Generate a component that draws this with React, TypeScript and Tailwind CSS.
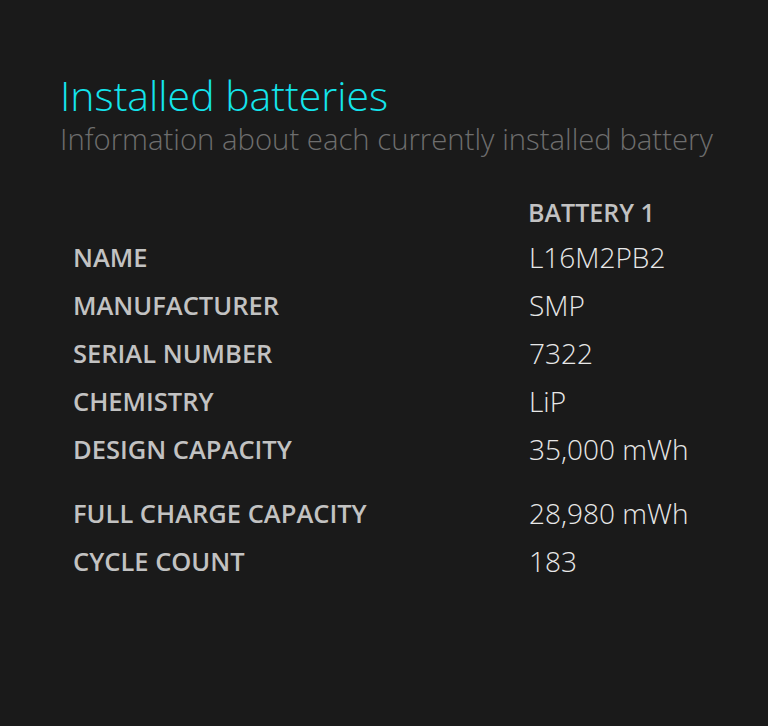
import React from "react";

const rows: [string, string][] = [
  ["NAME", "L16M2PB2"],
  ["MANUFACTURER", "SMP"],
  ["SERIAL NUMBER", "7322"],
  ["CHEMISTRY", "LiP"],
  ["DESIGN CAPACITY", "35,000 mWh"],
];
const rows2: [string, string][] = [
  ["FULL CHARGE CAPACITY", "28,980 mWh"],
  ["CYCLE COUNT", "183"],
];

function Row({ label, value }: { label: string; value: string }) {
  return (
    <div className="flex h-[48px] items-center">
      <div className="w-[469px] pl-[13px] text-[25.5px] font-semibold text-[#c2c2c2]">{label}</div>
      <div className="text-[28px] font-light text-[#e8e8e8]">{value}</div>
    </div>
  );
}

export default function App() {
  return (
    <div
      className="h-[726px] w-[768px] bg-[#1a1a1a] pl-[60px] pt-[71px]"
      style={{ fontFamily: '"Open Sans", "Noto Sans", sans-serif' }}
    >
      <h1 className="text-[41px] font-light leading-[48px] text-[#14e4ec]">Installed batteries</h1>
      <p className="text-[29.3px] font-light leading-[40px] text-[#6e6e6e]">
        Information about each currently installed battery
      </p>
      <div className="mt-[34px]">
        <div className="flex h-[40px] items-center">
          <div className="w-[468px]" />
          <div className="text-[25px] font-semibold text-[#c2c2c2]">BATTERY 1</div>
        </div>
        {rows.map(([l, v]) => (
          <Row key={l} label={l} value={v} />
        ))}
        <div className="h-[16px]" />
        {rows2.map(([l, v]) => (
          <Row key={l} label={l} value={v} />
        ))}
      </div>
    </div>
  );
}
